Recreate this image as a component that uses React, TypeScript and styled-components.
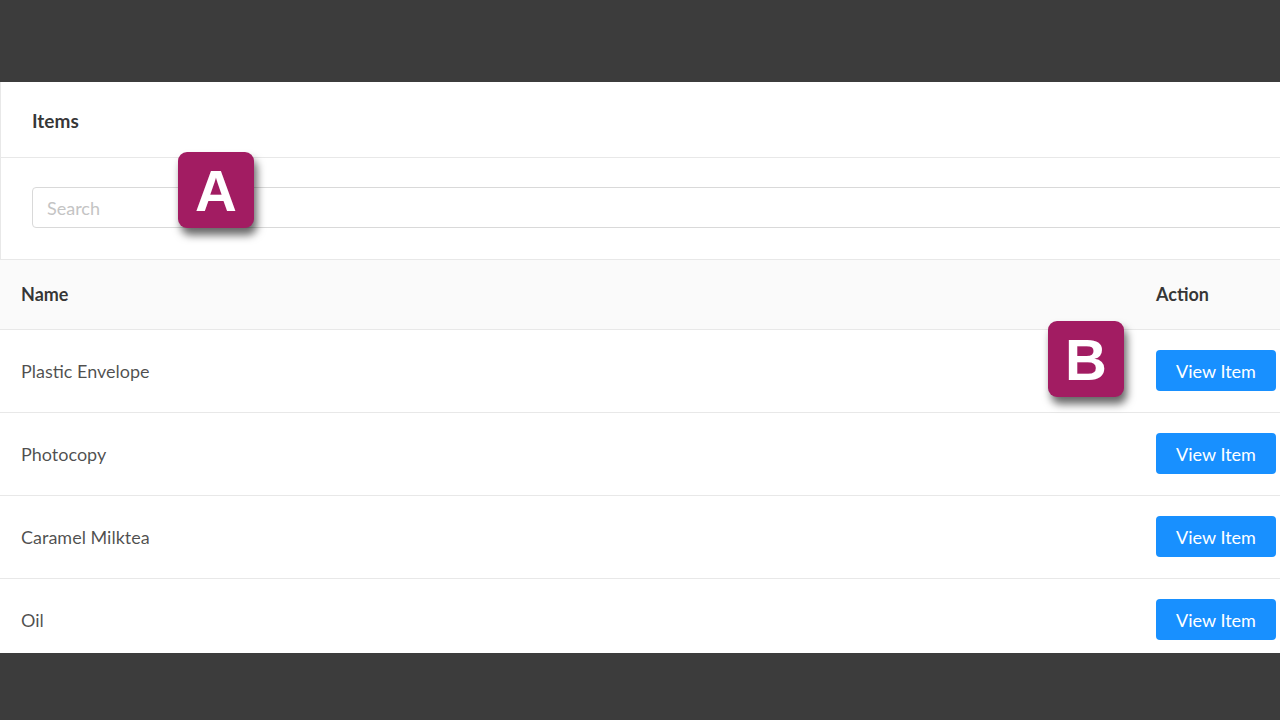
import React from 'react';
import styled, {createGlobalStyle} from 'styled-components';

const GlobalStyle = createGlobalStyle`
html, body {
margin: 0;
padding: 0;
background: #3c3c3c;
overflow: hidden;
}
* {
box-sizing: border-box;
}
`;

const items = ['Plastic Envelope', 'Photocopy', 'Caramel Milktea', 'Oil'];

export default function App() {
    return (
        <Screen>
            <GlobalStyle/>
            <TopBar/>
            <Stage>
                <Card>
                    <CardHeader>
                        <CardTitle>Items</CardTitle>
                    </CardHeader>
                    <CardBody>
                        <SearchInput placeholder="Search"/>
                    </CardBody>
                </Card>
                <Table>
                    <thead>
                    <tr>
                        <HeadCell>Name</HeadCell>
                        <HeadCell $action>Action</HeadCell>
                    </tr>
                    </thead>
                    <tbody>
                    {items.map((name) => (
                        <tr key={name}>
                            <Cell>{name}</Cell>
                            <Cell $action>
                                <ViewButton>View Item</ViewButton>
                            </Cell>
                        </tr>
                    ))}
                    </tbody>
                </Table>
                <Badge $left={178} $top={70}>A</Badge>
                <Badge $left={1048} $top={239}>B</Badge>
            </Stage>
            <BottomBar/>
        </Screen>
    );
}

const Screen = styled.div`
width: 1280px;
height: 720px;
display: flex;
flex-direction: column;
font-family: Lato, "Open Sans", sans-serif;
`;

const TopBar = styled.div`
height: 82px;
background: #3c3c3c;
flex-shrink: 0;
`;

const BottomBar = styled.div`
flex: 1;
background: #3c3c3c;
`;

const Stage = styled.div`
position: relative;
height: 571px;
flex-shrink: 0;
background: #fff;
overflow: hidden;
`;

const Card = styled.div`
width: 1340px;
border: 1px solid #e8e8e8;
border-top: none;
background: #fff;
`;

const CardHeader = styled.div`
height: 76px;
padding: 2px 31px 0;
display: flex;
align-items: center;
border-bottom: 1px solid #e8e8e8;
`;

const CardTitle = styled.div`
font-size: 19px;
font-weight: 700;
color: rgba(0, 0, 0, 0.8);
`;

const CardBody = styled.div`
padding: 29px 31px 31px;
`;

const SearchInput = styled.input`
display: block;
width: 100%;
height: 41px;
border: 1px solid #d9d9d9;
border-radius: 4px;
padding: 0 14px;
font-family: Lato, "Open Sans", sans-serif;
font-size: 18px;
color: rgba(0, 0, 0, 0.65);
outline: none;
&::placeholder {
color: #c4c4c4;
}
`;

const Table = styled.table`
width: 1320px;
border-collapse: collapse;
`;

const HeadCell = styled.th<{ $action?: boolean }>`
height: 69px;
padding: 0 0 0 ${(p) => (p.$action ? '0' : '21px')};
width: ${(p) => (p.$action ? '164px' : 'auto')};
background: #fafafa;
border-bottom: 1px solid #e8e8e8;
text-align: left;
font-size: 18px;
font-weight: 700;
color: rgba(0, 0, 0, 0.8);
`;

const Cell = styled.td<{ $action?: boolean }>`
height: 83px;
padding: 0 0 0 ${(p) => (p.$action ? '0' : '21px')};
border-bottom: 1px solid #e8e8e8;
font-size: 18px;
color: rgba(0, 0, 0, 0.7);
`;

const ViewButton = styled.button`
width: 120px;
height: 41px;
border: none;
border-radius: 4px;
background: #1890ff;
color: #fff;
font-family: Lato, "Open Sans", sans-serif;
font-size: 18px;
cursor: pointer;
`;

const Badge = styled.div<{ $left: number; $top: number }>`
position: absolute;
left: ${(p) => p.$left}px;
top: ${(p) => p.$top}px;
width: 76px;
height: 76px;
border-radius: 9px;
background: #a21c62;
color: #fff;
display: flex;
align-items: center;
justify-content: center;
font-family: "Liberation Sans", Arial, sans-serif;
font-weight: 700;
font-size: 58px;
box-shadow: 3px 7px 9px rgba(0, 0, 0, 0.6);
`;
